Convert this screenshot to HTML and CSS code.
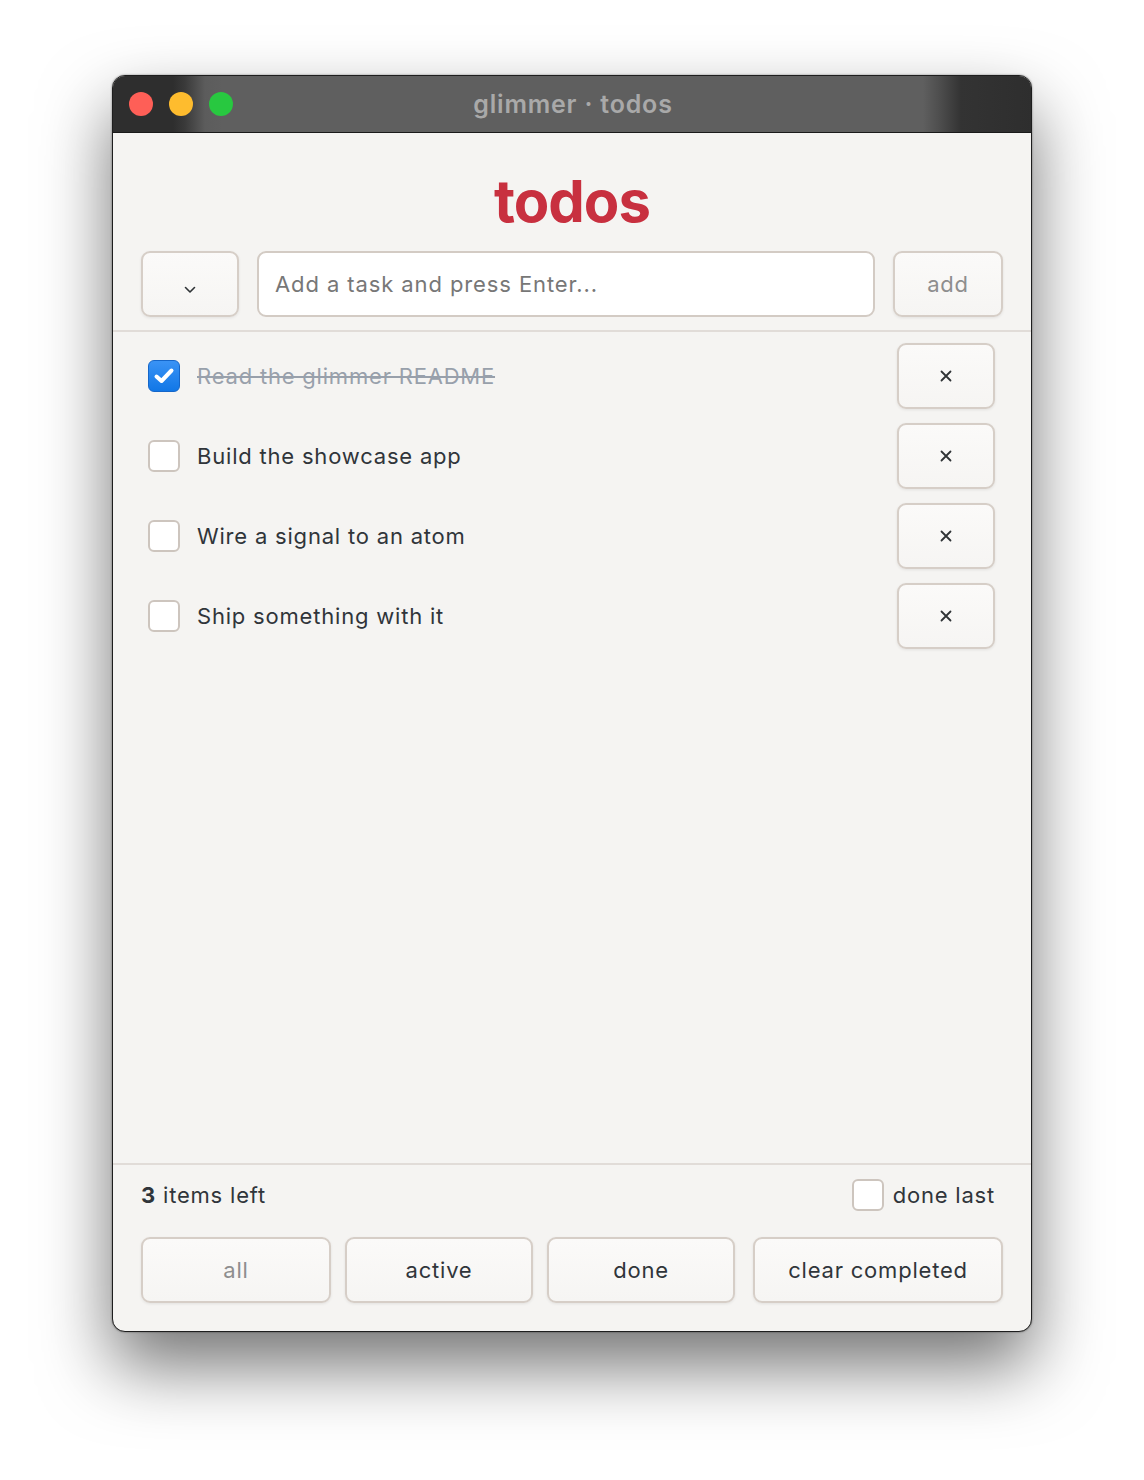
FILE: index.html
```html
<!DOCTYPE html>
<html lang="en">
<head>
<meta charset="utf-8">
<title>glimmer · todos</title>
<link rel="stylesheet" href="styles.css">
</head>
<body>
<div class="window">
  <header class="titlebar">
    <div class="lights">
      <span class="light red"></span>
      <span class="light yellow"></span>
      <span class="light green"></span>
    </div>
    <div class="title">glimmer · todos</div>
  </header>
  <main class="app">
    <h1 class="brand">todos</h1>
    <div class="entry">
      <button class="btn toggle-all" aria-label="toggle all">
        <svg width="12" height="8" viewBox="0 0 12 8"><path d="M1.5 1.5 L6 6 L10.5 1.5" fill="none" stroke="#2f3336" stroke-width="1.6" stroke-linecap="round" stroke-linejoin="round"/></svg>
      </button>
      <input class="field" type="text" placeholder="Add a task and press Enter...">
      <button class="btn add">add</button>
    </div>
    <ul class="list">
      <li class="item done">
        <span class="check on">
          <svg width="24" height="20" viewBox="0 0 24 20"><path d="M4.5 10.5 L9.5 15 L19.5 4.5" fill="none" stroke="#fff" stroke-width="4" stroke-linecap="round" stroke-linejoin="round"/></svg>
        </span>
        <span class="label">Read the glimmer README</span>
        <button class="btn remove" aria-label="remove"><svg width="12" height="12" viewBox="0 0 12 12"><path d="M1.5 1.5 L10.5 10.5 M10.5 1.5 L1.5 10.5" stroke="#2f3336" stroke-width="1.8" stroke-linecap="round"/></svg></button>
      </li>
      <li class="item">
        <span class="check"></span>
        <span class="label">Build the showcase app</span>
        <button class="btn remove" aria-label="remove"><svg width="12" height="12" viewBox="0 0 12 12"><path d="M1.5 1.5 L10.5 10.5 M10.5 1.5 L1.5 10.5" stroke="#2f3336" stroke-width="1.8" stroke-linecap="round"/></svg></button>
      </li>
      <li class="item">
        <span class="check"></span>
        <span class="label">Wire a signal to an atom</span>
        <button class="btn remove" aria-label="remove"><svg width="12" height="12" viewBox="0 0 12 12"><path d="M1.5 1.5 L10.5 10.5 M10.5 1.5 L1.5 10.5" stroke="#2f3336" stroke-width="1.8" stroke-linecap="round"/></svg></button>
      </li>
      <li class="item">
        <span class="check"></span>
        <span class="label">Ship something with it</span>
        <button class="btn remove" aria-label="remove"><svg width="12" height="12" viewBox="0 0 12 12"><path d="M1.5 1.5 L10.5 10.5 M10.5 1.5 L1.5 10.5" stroke="#2f3336" stroke-width="1.8" stroke-linecap="round"/></svg></button>
      </li>
    </ul>
    <footer class="footer">
      <div class="status">
        <span class="count"><strong>3</strong> items left</span>
        <label class="sort"><span class="check small"></span>done last</label>
      </div>
      <div class="filters">
        <button class="btn filter current">all</button>
        <button class="btn filter">active</button>
        <button class="btn filter">done</button>
        <button class="btn filter">clear completed</button>
      </div>
    </footer>
  </main>
</div>
</body>
</html>
```
FILE: styles.css
```css
* { box-sizing: border-box; }

html, body {
  margin: 0;
  background: #ffffff;
}

body {
  min-height: 1480px;
  padding: 75px 0 0 112px;
  font-family: Inter, "Noto Sans", sans-serif;
  color: #30353a;
}

.window {
  width: 920px;
  height: 1257px;
  border: 1px solid #1e1e1e;
  border-radius: 13px;
  overflow: hidden;
  background: #f5f4f2;
  display: flex;
  flex-direction: column;
  box-shadow: 0 34px 70px rgba(0, 0, 0, 0.55), 0 0 2px rgba(0, 0, 0, 0.5);
}

/* title bar */
.titlebar {
  height: 57px;
  flex: none;
  display: flex;
  align-items: center;
  justify-content: center;
  border-bottom: 1px solid #1a1a1a;
  background: linear-gradient(90deg,
    #2e2e2e 0px, #2e2e2e 60px, #3a3a3a 72px, #5c5c5c 92px, #5f5f5f 110px,
    #5f5f5f 810px, #4c4c4c 828px, #333 848px, #2e2e2e 920px);
  position: relative;
}

.lights {
  position: absolute;
  left: 16px;
  top: 16px;
  display: flex;
  gap: 16px;
}

.light {
  width: 24px;
  height: 24px;
  border-radius: 50%;
}
.light.red { background: #fe5f57; }
.light.yellow { background: #febc2e; }
.light.green { background: #28c840; }

.title {
  font-size: 25px;
  font-weight: 600;
  color: #a9a9a9;
  letter-spacing: 0.8px;
  margin-left: 2px;
}

/* app body */
.app {
  flex: 1;
  display: flex;
  flex-direction: column;
  min-height: 0;
}

.brand {
  margin: 38px 0 0;
  height: 80px;
  text-align: center;
  font-size: 58px;
  font-weight: 700;
  line-height: 60px;
  color: #c8303f;
  letter-spacing: -1px;
}

.entry {
  display: flex;
  gap: 18px;
  padding: 0 28px 13px;
  border-bottom: 2px solid #e1dcd8;
}

.btn {
  font-family: inherit;
  font-size: 22px;
  letter-spacing: 0.8px;
  color: #30353a;
  height: 66px;
  border: 2px solid #d6cec7;
  border-radius: 9px;
  background: linear-gradient(#fbfaf9, #f6f5f3);
  box-shadow: 0 1px 3px rgba(0, 0, 0, 0.08);
  display: flex;
  align-items: center;
  justify-content: center;
  padding: 0;
}

.toggle-all {
  width: 98px;
  flex: none;
  padding-top: 12px;
}

.field {
  flex: 1;
  height: 66px;
  border: 2px solid #d3cbc4;
  border-radius: 9px;
  background: #fff;
  font-family: inherit;
  font-size: 22px;
  padding: 0 16px;
  color: #30353a;
}
.field::placeholder { color: #777; letter-spacing: 0.9px; }

.add {
  width: 110px;
  flex: none;
  color: #8e8e8e;
}

/* task list */
.list {
  list-style: none;
  margin: 0;
  padding: 11px 36px 0 35px;
  flex: 1;
  display: flex;
  flex-direction: column;
  gap: 14px;
}

.item {
  display: flex;
  align-items: center;
  height: 66px;
}

.check {
  width: 32px;
  height: 32px;
  flex: none;
  border: 2px solid #cdc5be;
  border-radius: 6px;
  background: #fff;
  display: flex;
  align-items: center;
  justify-content: center;
}
.check.on {
  border: 1px solid #1566c9;
  background: linear-gradient(#3a93f5, #1177e6);
}

.label {
  flex: 1;
  margin-left: 17px;
  font-size: 22px;
  letter-spacing: 0.8px;
  color: #30353a;
}
.item.done .label {
  color: #98a0ab;
  text-decoration: line-through;
  text-decoration-thickness: 2px;
}

.remove {
  width: 98px;
  flex: none;
}

/* footer */
.footer {
  border-top: 2px solid #e1dcd8;
  padding: 13px 28px 28px;
}

.status {
  display: flex;
  justify-content: space-between;
  align-items: center;
  height: 34px;
  font-size: 22px;
  letter-spacing: 0.8px;
}
.count strong { font-weight: 700; }

.sort {
  display: flex;
  align-items: center;
  gap: 9px;
  margin-right: 8px;
}
.check.small {
  width: 32px;
  height: 32px;
}

.filters {
  margin-top: 25px;
  display: grid;
  grid-template-columns: 190px 188px 188px 1fr;
  gap: 14px;
}
.filters .btn:nth-child(4) { margin-left: 4px; }
.filter.current { color: #8e8e8e; }
```
